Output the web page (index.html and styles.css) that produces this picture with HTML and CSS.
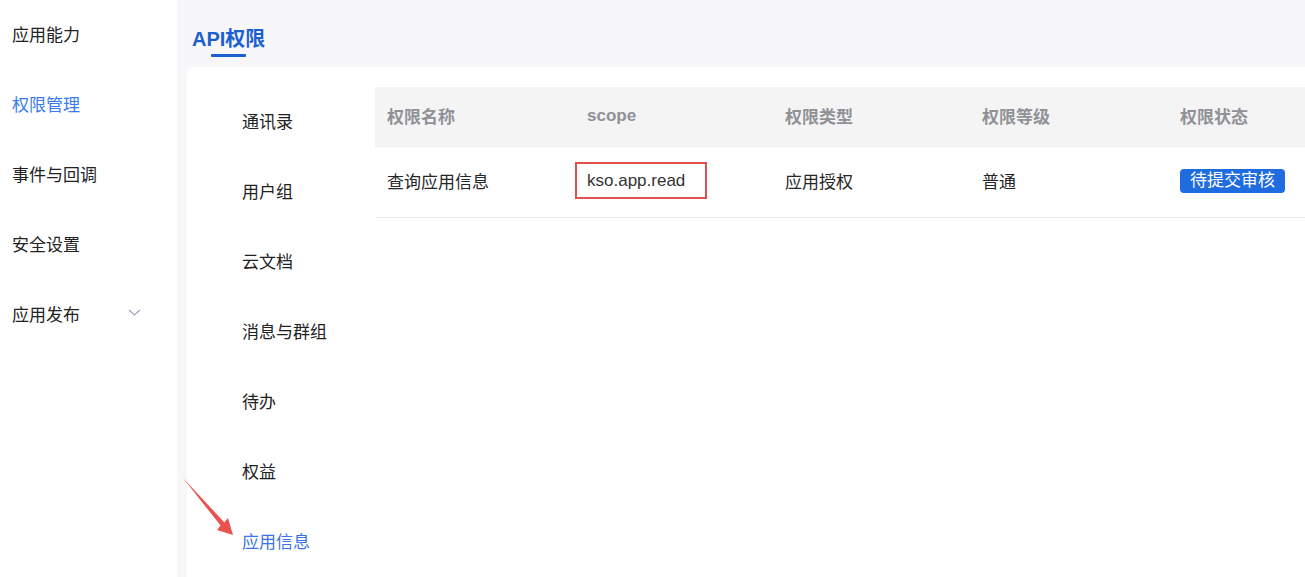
FILE: index.html
```html
<!DOCTYPE html>
<html lang="zh-CN">
<head>
  <meta charset="UTF-8">
  <meta name="viewport" content="width=device-width, initial-scale=1.0">
  <title>API权限</title>
  <link rel="stylesheet" href="styles.css">
</head>
<body>
  <aside class="sidebar">
    <div class="side-item">应用能力</div>
    <div class="side-item active">权限管理</div>
    <div class="side-item">事件与回调</div>
    <div class="side-item">安全设置</div>
    <div class="side-item">
      应用发布
      <svg class="chevron" width="13" height="7" viewBox="0 0 13 7"><path d="M1 1l5.5 5 5.5-5" fill="none" stroke="#97a4bb" stroke-width="1.1"/></svg>
    </div>
  </aside>

  <main class="main">
    <div class="page-head">
      <div class="tab-title">
        <span>API权限</span>
        <i class="tab-line"></i>
      </div>
    </div>

    <section class="card">
      <nav class="subnav">
        <div class="sub-item">通讯录</div>
        <div class="sub-item">用户组</div>
        <div class="sub-item">云文档</div>
        <div class="sub-item">消息与群组</div>
        <div class="sub-item">待办</div>
        <div class="sub-item">权益</div>
        <div class="sub-item active">应用信息</div>
      </nav>

      <div class="table">
        <div class="row head">
          <div class="cell">权限名称</div>
          <div class="cell">scope</div>
          <div class="cell">权限类型</div>
          <div class="cell">权限等级</div>
          <div class="cell">权限状态</div>
        </div>
        <div class="row">
          <div class="cell">查询应用信息</div>
          <div class="cell"><span class="mark">kso.app.read</span></div>
          <div class="cell">应用授权</div>
          <div class="cell">普通</div>
          <div class="cell"><span class="badge">待提交审核</span></div>
        </div>
      </div>
    </section>
  </main>

  <!-- annotation arrow -->
  <svg class="arrow" width="60" height="64" viewBox="0 0 60 64">
    <path d="M3 3L44.4 47.4L48 43L53 60L37 55L40.6 50.6Z" fill="#e8524f"/>
  </svg>
</body>
</html>
```

FILE: styles.css
```css
* {
  box-sizing: border-box;
}
html, body {
  height: 100%;
}
body {
  margin: 0;
  display: flex;
  overflow: hidden;
  background-color: #f7f7f9;
  font-family: "Liberation Sans", "Noto Sans CJK SC", sans-serif;
  font-size: 17px;
  color: #262626;
}

/* left menu */
.sidebar {
  width: 177px;
  flex-shrink: 0;
  background-color: #fff;
}
.side-item {
  height: 70px;
  display: flex;
  align-items: center;
  padding: 0 0 3px 12px;
  color: #222;
}
.side-item.active {
  color: #3a7bf0;
}
.chevron {
  margin-left: 48px;
  margin-top: -2px;
}

/* main area */
.main {
  flex: 1;
  display: flex;
  flex-direction: column;
  padding-left: 10px;
  min-width: 0;
}
.page-head {
  height: 67px;
  padding: 26px 0 0 5px;
}
.tab-title {
  display: inline-flex;
  flex-direction: column;
  align-items: center;
  color: #1b5fd1;
  font-size: 20px;
  font-weight: bold;
  line-height: 26px;
}
.tab-line {
  width: 35px;
  height: 3px;
  margin-top: 2px;
  border-radius: 1px;
  background-color: #1b5fd1;
}

.card {
  flex: 1;
  display: flex;
  background-color: #fff;
  border-top-left-radius: 8px;
}
.subnav {
  width: 188px;
  flex-shrink: 0;
  padding-top: 20px;
}
.sub-item {
  height: 70px;
  display: flex;
  align-items: center;
  padding: 0 0 3px 55px;
  color: #222;
}
.sub-item.active {
  color: #3b73e8;
}

/* table */
.table {
  flex: 1;
  margin-top: 20px;
}
.row {
  display: grid;
  grid-template-columns: 200px 198px 197px 198px 1fr;
  height: 71px;
  align-items: center;
  padding-bottom: 3px;
  border-bottom: 1px solid #ebebf0;
}
.row.head {
  height: 60px;
  padding-bottom: 2px;
  background-color: #f4f4f5;
  color: #8f9196;
  font-weight: bold;
}
.cell {
  padding-left: 12px;
  white-space: nowrap;
}
.mark {
  display: inline-block;
  margin-left: -12px;
  width: 132px;
  height: 37px;
  line-height: 33px;
  padding-left: 10px;
  border: 2px solid #e0504e;
  color: #333;
}
.badge {
  display: inline-block;
  height: 24px;
  line-height: 24px;
  padding: 0 10px;
  border-radius: 4px;
  background-color: #1f6be0;
  color: #fff;
}

.arrow {
  position: absolute;
  left: 180px;
  top: 475px;
}
```
